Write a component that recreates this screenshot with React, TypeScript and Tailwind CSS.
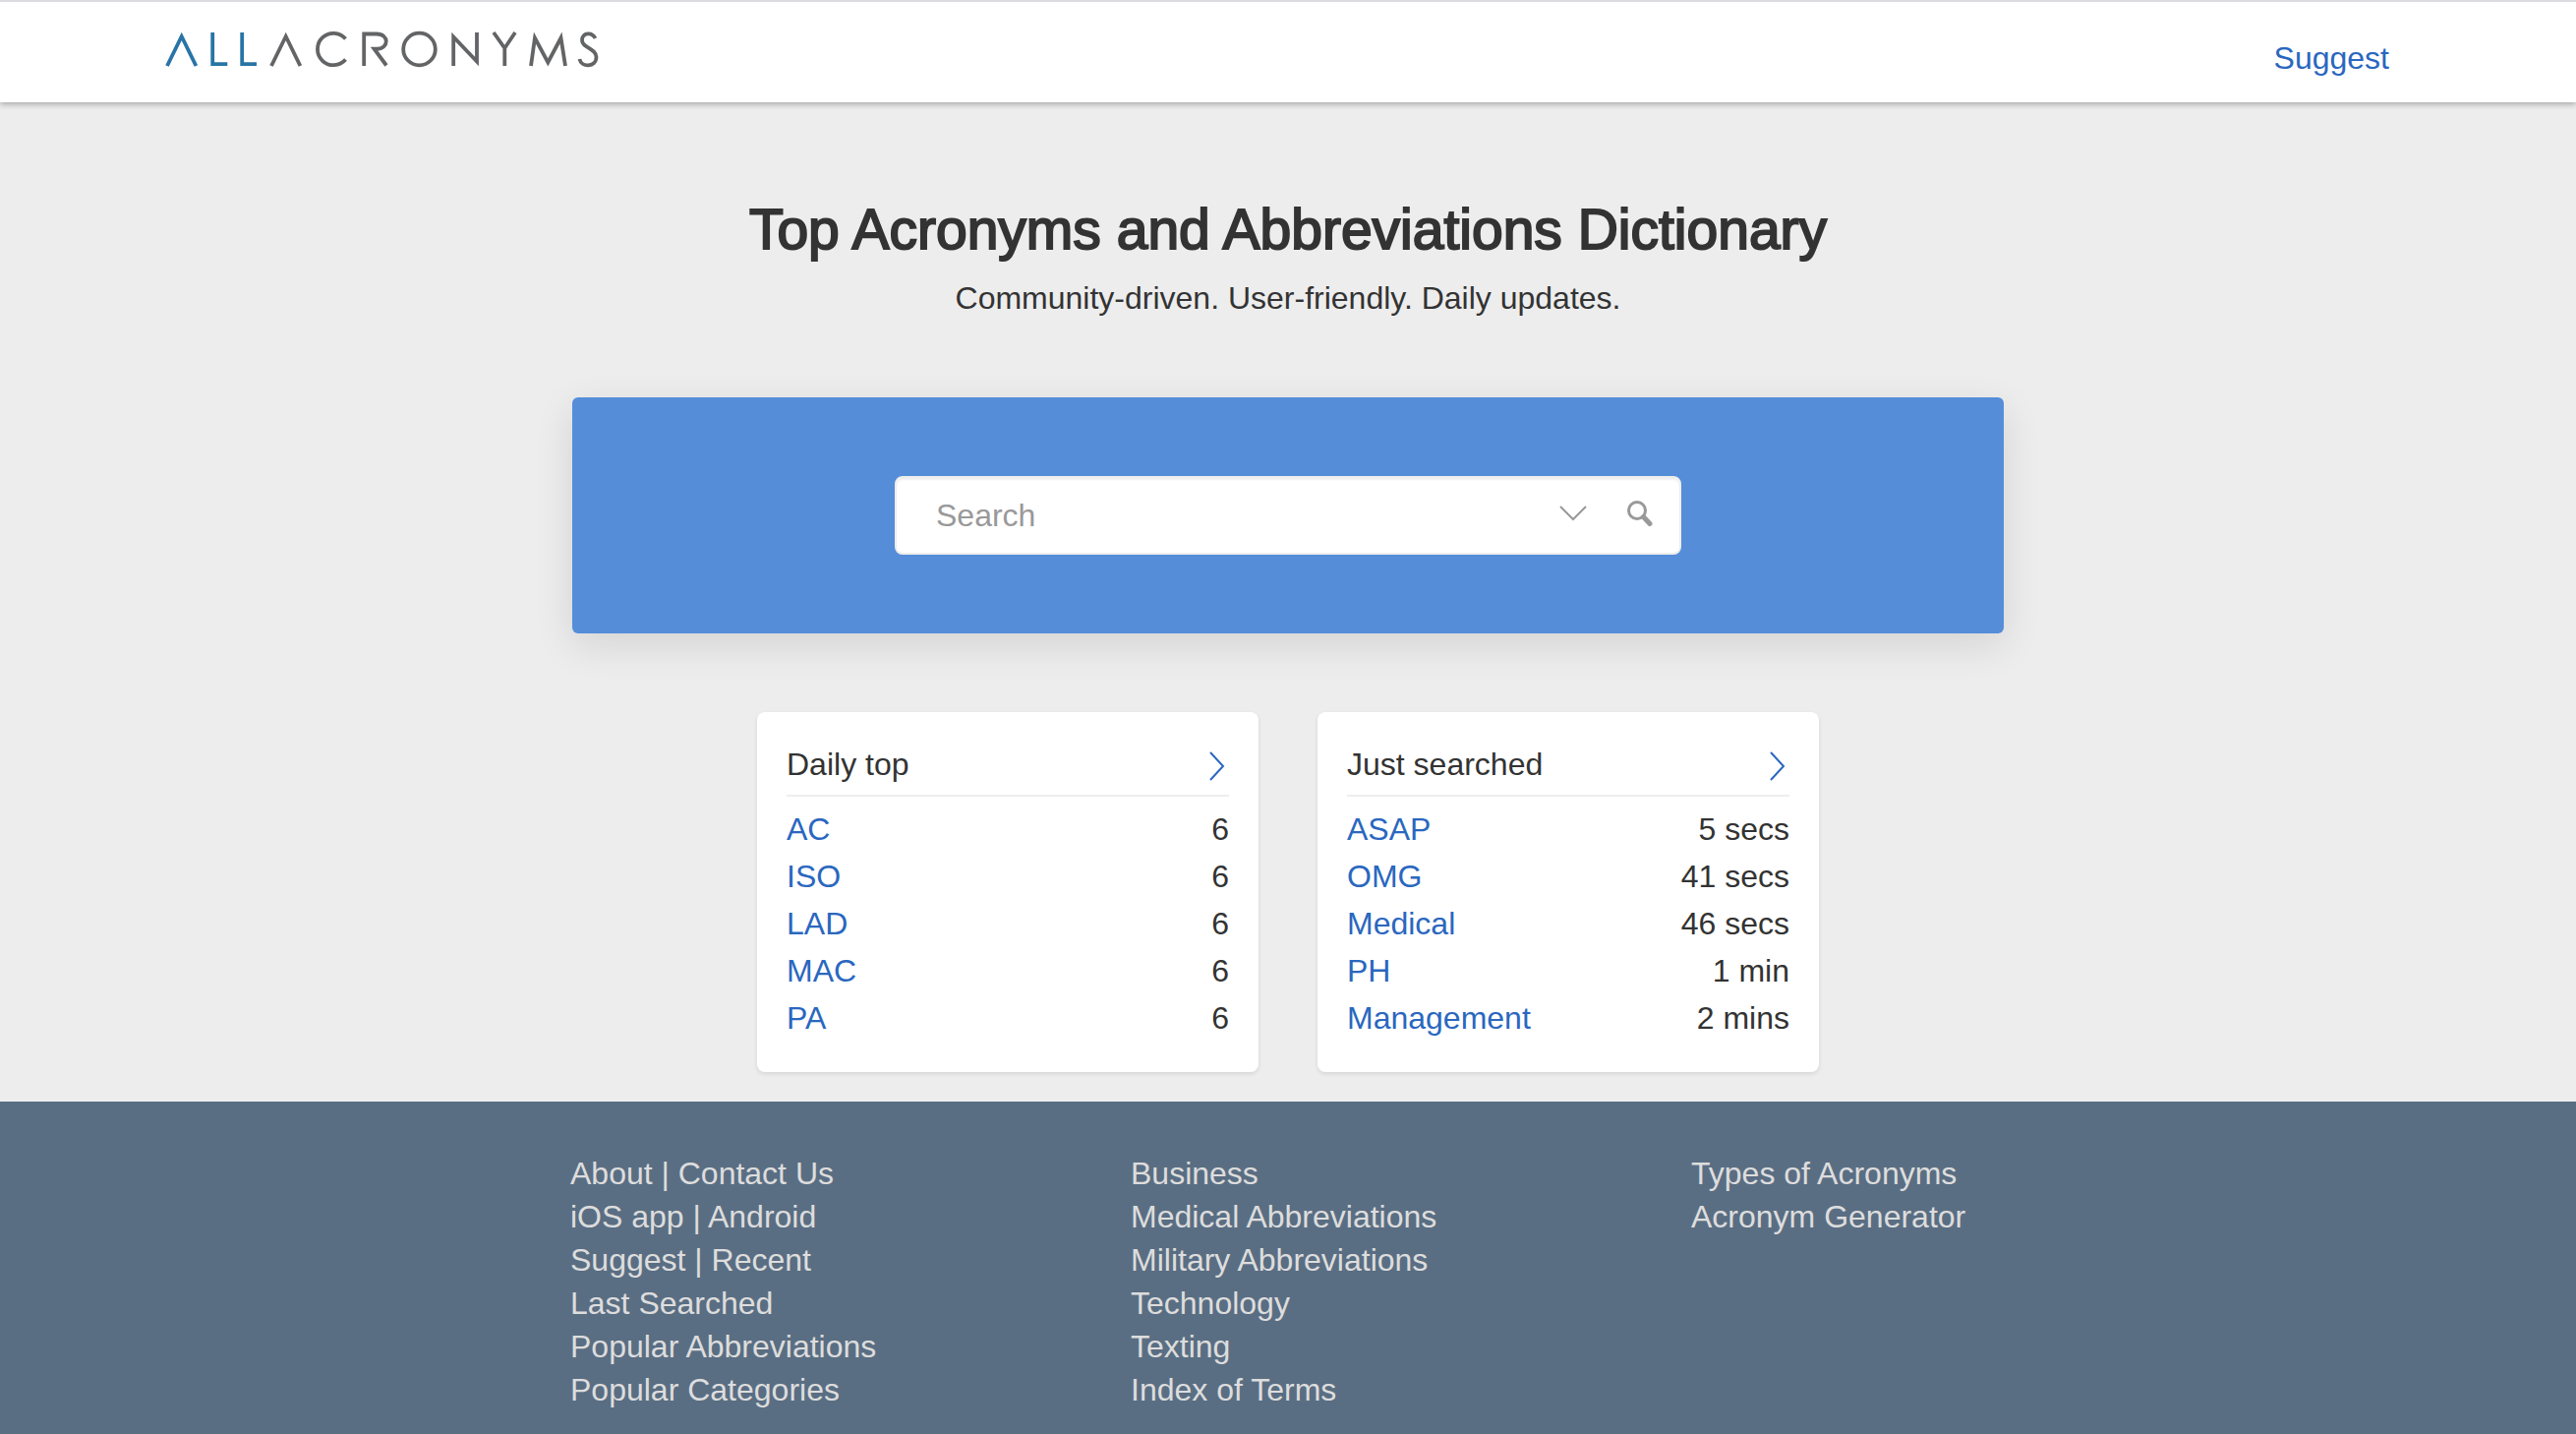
import type { ReactNode } from "react";

type Row = { term: string; value: string };

const dailyTop: Row[] = [
  { term: "AC", value: "6" },
  { term: "ISO", value: "6" },
  { term: "LAD", value: "6" },
  { term: "MAC", value: "6" },
  { term: "PA", value: "6" },
];

const justSearched: Row[] = [
  { term: "ASAP", value: "5 secs" },
  { term: "OMG", value: "41 secs" },
  { term: "Medical", value: "46 secs" },
  { term: "PH", value: "1 min" },
  { term: "Management", value: "2 mins" },
];

// each line holds one or more links, separated by a pipe
const footerColumns: string[][][] = [
  [
    ["About", "Contact Us"],
    ["iOS app", "Android"],
    ["Suggest", "Recent"],
    ["Last Searched"],
    ["Popular Abbreviations"],
    ["Popular Categories"],
  ],
  [
    ["Business"],
    ["Medical Abbreviations"],
    ["Military Abbreviations"],
    ["Technology"],
    ["Texting"],
    ["Index of Terms"],
  ],
  [["Types of Acronyms"], ["Acronym Generator"]],
];

function Logo() {
  return (
    <svg width="442" height="38" viewBox="0 0 442 38" fill="none" strokeWidth="3.8" role="img" aria-label="All Acronyms">
      <g stroke="#2874a6">
        <path d="M3 36 17.700 6 32.400 36" />
        <path d="M49.200 2V34.200H64.300" />
        <path d="M79.200 2V34.200H94" />
      </g>
      <g stroke="#636466">
        <path d="M109 36 123.700 6 138.400 36" />
        <path d="M184.500 8.500A16.200 16.200 0 1 0 184.500 29.500" />
        <path d="M203.200 36V3.500H216C229 3.500 229 18.700 216 18.700H213.500L226 35.500" />
        <circle cx="259.5" cy="19" r="16.300" />
        <path d="M294.200 36V6.500L318 31.500V2" />
        <path d="M335 2 346.300 18 357 2M346.300 17V36" />
        <path d="M373 36 377 7.500 390.300 32.500 403.500 7.500 408 36" />
        <path d="M438.500 8C435 1 425 2 425 10C425 18 439.500 18 439.500 27C439.500 37.500 424 38 422.500 29" />
      </g>
    </svg>
  );
}

function Card({ title, rows }: { title: string; rows: Row[] }) {
  return (
    <section className="w-full max-w-[510px] rounded-lg bg-white px-[30px] pt-[31px] pb-[31px] shadow-[0_2px_4px_rgba(0,0,0,0.1)]">
      <div className="flex items-center justify-between border-b-2 border-[#eeeeee] pb-[9px]">
        <h2>{title}</h2>
        <a href="#" aria-label={`More: ${title}`} className="px-1 pt-1 text-[#2a67bf]">
          <svg width="16" height="30" viewBox="0 0 16 30" fill="none" stroke="currentColor" strokeWidth="2">
            <path d="M1 1 14 15 1 29" />
          </svg>
        </a>
      </div>
      <table className="mt-[9px] w-full">
        <tbody>
          {rows.map((row) => (
            <tr key={row.term} className="h-12">
              <th scope="row" className="text-left font-normal">
                <a href="#" className="text-[#2a67bf]">{row.term}</a>
              </th>
              <td className="text-right">{row.value}</td>
            </tr>
          ))}
        </tbody>
      </table>
    </section>
  );
}

function FooterLine({ links }: { links: string[] }) {
  const parts: ReactNode[] = [];
  links.forEach((link, i) => {
    if (i > 0) parts.push(" | ");
    parts.push(
      <a key={link} href="#">
        {link}
      </a>
    );
  });
  return <li>{parts}</li>;
}

export default function App() {
  return (
    <div className="flex min-h-screen flex-col bg-[#ededed] font-['Liberation_Sans',Arial,sans-serif] text-[32px] leading-[44px] text-[#333333]">
      <header className="flex items-start justify-between border-t-2 border-[#dcdbe0] bg-white pr-[190px] pl-[167px] shadow-[0_2px_6px_rgba(0,0,0,0.3)]">
        <a href="#" className="mt-[29px]">
          <Logo />
        </a>
        <a href="#" className="mt-[35px] mb-[23px] text-[#2a67bf]">
          Suggest
        </a>
      </header>

      <main className="flex flex-col items-center px-6 pb-[30px]">
        <h1 className="mt-[97px] text-center text-[57px] leading-[64px] [-webkit-text-stroke:2px_#333333]">
          Top Acronyms and Abbreviations Dictionary
        </h1>
        <p className="mt-4 text-center">Community-driven. User-friendly. Daily updates.</p>

        <form
          onSubmit={(e) => e.preventDefault()}
          className="mt-[79px] flex w-full max-w-[1456px] justify-center rounded-md bg-[#558dd9] p-20 shadow-[0_12px_40px_rgba(0,0,0,0.11)]"
        >
          <div className="flex h-20 w-full max-w-[800px] items-center rounded-lg border-2 border-[#eeeeee] bg-white pr-[26px] pl-10 shadow-[inset_0_2px_2px_rgba(0,0,0,0.06)]">
            <input
              type="search"
              aria-label="Search"
              placeholder="Search"
              className="min-w-0 flex-1 bg-transparent outline-none placeholder:text-[#999999]"
            />
            <button type="button" aria-label="Search options" className="mr-10 pb-1 text-[#999999]">
              <svg width="28" height="16" viewBox="0 0 28 16" fill="none" stroke="currentColor" strokeWidth="2">
                <path d="M1 1 14 14 27 1" />
              </svg>
            </button>
            <button type="submit" aria-label="Search" className="pb-1 text-[#999999]">
              <svg width="28" height="28" viewBox="0 0 28 28" fill="none" stroke="currentColor">
                <circle cx="11" cy="11" r="8.500" strokeWidth="3" />
                <path d="M17.500 17.500 24 24.500" strokeWidth="5" strokeLinecap="round" />
              </svg>
            </button>
          </div>
        </form>

        <div className="mt-20 flex w-full justify-center gap-[60px]">
          <Card title="Daily top" rows={dailyTop} />
          <Card title="Just searched" rows={justSearched} />
        </div>
      </main>

      <footer className="flex-1 bg-[#5a6e83] px-6 pt-[51px] pb-5 text-[#dddddd]">
        <div className="mx-auto grid max-w-[1460px] grid-cols-[510px_510px_1fr] gap-x-[60px]">
          {footerColumns.map((lines, i) => (
            <ul key={i}>
              {lines.map((links) => (
                <FooterLine key={links[0]} links={links} />
              ))}
            </ul>
          ))}
        </div>
      </footer>
    </div>
  );
}
